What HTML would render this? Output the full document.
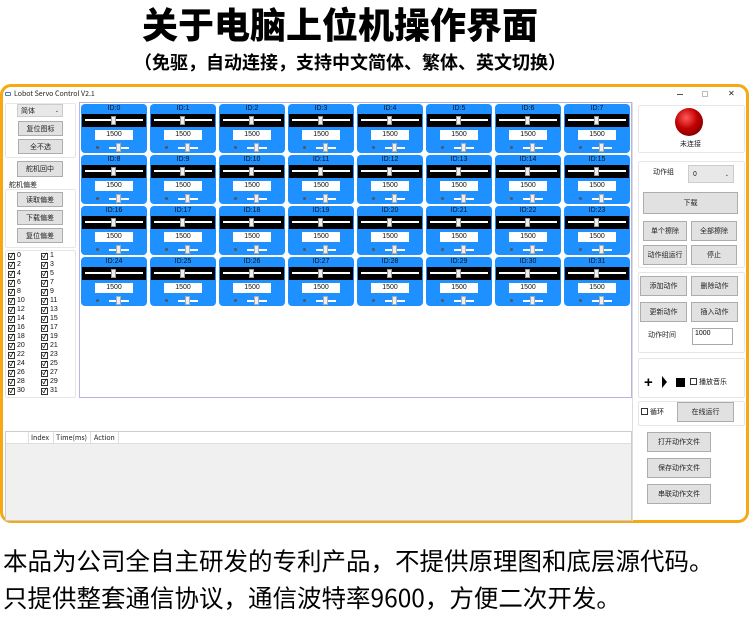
<!DOCTYPE html>
<html><head><meta charset="utf-8">
<style>
*{box-sizing:border-box;margin:0;padding:0}
body{width:750px;height:617px;background:#fff;position:relative;overflow:hidden;font-family:"Liberation Sans","Noto Sans CJK SC",sans-serif;}
.a{position:absolute}
.title{left:0;width:680px;top:1px;text-align:center;font-size:36px;font-weight:900;color:#000;line-height:44px;font-family:"Noto Sans CJK SC",sans-serif;}
.sub{left:0;width:700px;top:50px;text-align:center;font-size:18px;font-weight:700;line-height:24px;font-family:"Noto Sans CJK SC",sans-serif;}
.frame{left:0;top:84px;width:749px;height:439px;border:3px solid #f7a815;border-radius:11px;background:#fff}
.tx{font-size:7px;color:#222;white-space:nowrap;line-height:9px;font-family:"Noto Sans CJK SC",sans-serif}
.btn{position:absolute;background:#e1e1e1;border:1px solid #adadad;font-size:7px;color:#222;display:flex;align-items:center;justify-content:center;font-family:"Noto Sans CJK SC",sans-serif}
.grp{position:absolute;border:1px solid #e6e6e6;border-radius:2px;background:#fff}
.tile{position:absolute;width:66px;height:49px;background:#1e90ff;border-radius:4px}
.tile .h{position:absolute;top:0;width:100%;text-align:center;font-size:7px;color:#111;line-height:10px}
.tile .bk{position:absolute;left:1px;right:1px;top:10px;height:13px;background:#000}
.tile .bk i{position:absolute;left:3px;right:3px;top:5px;height:2px;background:#fff}
.tile .bk b{position:absolute;left:29px;top:2px;width:5px;height:9px;background:#eee;border:1px solid #999}
.tile .in{position:absolute;left:14px;top:26px;width:38px;height:10px;background:#fff;font-size:7px;text-align:center;line-height:10px;color:#111}
.tile .dt{position:absolute;left:15px;top:42px;width:3px;height:3px;border-radius:50%;background:#555}
.tile .sl{position:absolute;left:28px;top:43px;width:20px;height:2px;background:#fff}
.tile .sk{position:absolute;left:35px;top:39px;width:5px;height:9px;background:#eee;border:1px solid #aaa}
.cb{position:absolute;font-size:7px;line-height:9px;color:#111}
.cb s{display:inline-block;width:7px;height:7px;border:1px solid #333;vertical-align:-1px;margin-right:2px;text-decoration:none;font-size:7px;line-height:5px;text-align:center;font-weight:bold}
.foot{left:3px;font-size:24.5px;color:#000;line-height:32px;white-space:nowrap;font-family:"Noto Sans CJK SC",sans-serif}
</style></head><body>
<div class="a title">关于电脑上位机操作界面</div>
<div class="a sub">（免驱，自动连接，支持中文简体、繁体、英文切换）</div>
<div class="a frame"></div>
<div class="a" style="left:5px;top:92px;width:6px;height:4px;border:1px solid #4a7fc0;border-radius:1px"></div>
<div class="a tx" style="left:14px;top:90px">Lobot Servo Control V2.1</div>
<div class="a" style="left:677px;top:94px;width:6px;height:1px;background:#555"></div>
<div class="a" style="left:702px;top:91px;width:6px;height:6px;border:1px solid #bbb"></div>
<div class="a tx" style="left:728px;top:89px;font-size:8px">✕</div>
<div class="grp" style="left:5px;top:103px;width:71px;height:55px"></div>
<div class="btn" style="left:17px;top:104px;width:46px;height:13px;justify-content:space-between;padding:0 3px;background:#e8e8e8;border-color:#ccc"><span>简体</span><span style="font-size:5px">⌄</span></div>
<div class="btn" style="left:18px;top:121px;width:45px;height:15px">复位图标</div>
<div class="btn" style="left:18px;top:139px;width:45px;height:15px">全不选</div>
<div class="btn" style="left:17px;top:161px;width:46px;height:16px">舵机回中</div>
<div class="a tx" style="left:9px;top:181px">舵机偏差</div>
<div class="grp" style="left:5px;top:189px;width:71px;height:59px"></div>
<div class="btn" style="left:17px;top:192px;width:46px;height:15px">读取偏差</div>
<div class="btn" style="left:17px;top:210px;width:46px;height:15px">下载偏差</div>
<div class="btn" style="left:17px;top:228px;width:46px;height:15px">复位偏差</div>
<div class="grp" style="left:5px;top:250px;width:71px;height:148px"></div>
<div id="cbs"></div>
<div class="a" style="left:79px;top:102px;width:553px;height:296px;border:1px solid #b4b4e6"></div>
<div id="tiles"></div>
<div class="a" style="left:5px;top:431px;width:627px;height:90px;background:#f0f0f0;border:1px solid #ccc"></div>
<div class="a" style="left:6px;top:432px;width:625px;height:12px;background:#fff;border-bottom:1px solid #ddd"></div>
<div class="a" style="left:28px;top:432px;width:1px;height:12px;background:#ddd"></div>
<div class="a tx" style="left:31px;top:434px">Index</div>
<div class="a" style="left:53px;top:432px;width:1px;height:12px;background:#ddd"></div>
<div class="a tx" style="left:56px;top:434px">Time(ms)</div>
<div class="a" style="left:90px;top:432px;width:1px;height:12px;background:#ddd"></div>
<div class="a tx" style="left:94px;top:434px">Action</div>
<div class="a" style="left:118px;top:432px;width:1px;height:12px;background:#ddd"></div>
<div class="a" style="left:632px;top:102px;width:1px;height:419px;background:#ddd"></div>
<div class="grp" style="left:638px;top:105px;width:107px;height:48px"></div>
<div class="a" style="left:675px;top:108px;width:28px;height:28px;border-radius:50%;background:radial-gradient(circle at 40% 35%,#ff5a5a,#c00000 45%,#5a0000 100%)"></div>
<div class="a tx" style="left:680px;top:140px">未连接</div>
<div class="grp" style="left:638px;top:161px;width:107px;height:107px"></div>
<div class="a tx" style="left:653px;top:168px">动作组</div>
<div class="btn" style="left:688px;top:165px;width:46px;height:18px;justify-content:space-between;padding:0 4px;background:#e8e8e8;border-color:#ccc"><span>0</span><span style="font-size:5px">⌄</span></div>
<div class="btn" style="left:643px;top:192px;width:95px;height:22px">下载</div>
<div class="btn" style="left:643px;top:221px;width:44px;height:20px">单个擦除</div>
<div class="btn" style="left:691px;top:221px;width:46px;height:20px">全部擦除</div>
<div class="btn" style="left:643px;top:245px;width:44px;height:20px">动作组运行</div>
<div class="btn" style="left:691px;top:245px;width:46px;height:20px">停止</div>
<div class="grp" style="left:638px;top:272px;width:107px;height:81px"></div>
<div class="btn" style="left:640px;top:276px;width:47px;height:20px">添加动作</div>
<div class="btn" style="left:691px;top:276px;width:47px;height:20px">删除动作</div>
<div class="btn" style="left:640px;top:302px;width:47px;height:20px">更新动作</div>
<div class="btn" style="left:691px;top:302px;width:47px;height:20px">插入动作</div>
<div class="a tx" style="left:648px;top:331px">动作时间</div>
<div class="a" style="left:692px;top:328px;width:41px;height:17px;border:1px solid #aaa;background:#fff;font-size:7px;padding:1px 2px">1000</div>
<div class="grp" style="left:638px;top:358px;width:107px;height:40px"></div>
<div class="a" style="left:644px;top:376px;font-size:15px;font-weight:bold;line-height:14px">+</div>
<div class="a" style="left:662px;top:376px;width:0;height:0;border-left:5px solid #000;border-top:6px solid transparent;border-bottom:6px solid transparent"></div>
<div class="a" style="left:676px;top:378px;width:9px;height:9px;background:#000"></div>
<div class="a cb" style="left:690px;top:378px"><s></s>播放音乐</div>
<div class="grp" style="left:638px;top:401px;width:107px;height:25px"></div>
<div class="a cb" style="left:641px;top:408px"><s></s>循环</div>
<div class="btn" style="left:677px;top:402px;width:57px;height:20px">在线运行</div>
<div class="btn" style="left:647px;top:432px;width:64px;height:20px">打开动作文件</div>
<div class="btn" style="left:647px;top:458px;width:64px;height:20px">保存动作文件</div>
<div class="btn" style="left:647px;top:484px;width:64px;height:20px">串联动作文件</div>
<div class="a foot" style="top:545px">本品为公司全自主研发的专利产品，不提供原理图和底层源代码。</div>
<div class="a foot" style="top:582px">只提供整套通信协议，通信波特率9600，方便二次开发。</div>
<script>
var t='';
for(var i=0;i<32;i++){var c=i%8,r=Math.floor(i/8);
t+='<div class="tile" style="left:'+(81+c*69)+'px;top:'+(104+r*51)+'px"><div class="h">ID:'+i+'</div><div class="bk"><i></i><b></b></div><div class="in">1500</div><div class="dt"></div><div class="sl"></div><div class="sk"></div></div>';}
document.getElementById('tiles').innerHTML=t;
var s='';
for(var i=0;i<32;i++){var c=i%2,r=Math.floor(i/2);
s+='<div class="cb" style="left:'+(8+c*33)+'px;top:'+(251+r*9)+'px"><s>✓</s>'+i+'</div>';}
document.getElementById('cbs').innerHTML=s;
</script>
</body></html>
